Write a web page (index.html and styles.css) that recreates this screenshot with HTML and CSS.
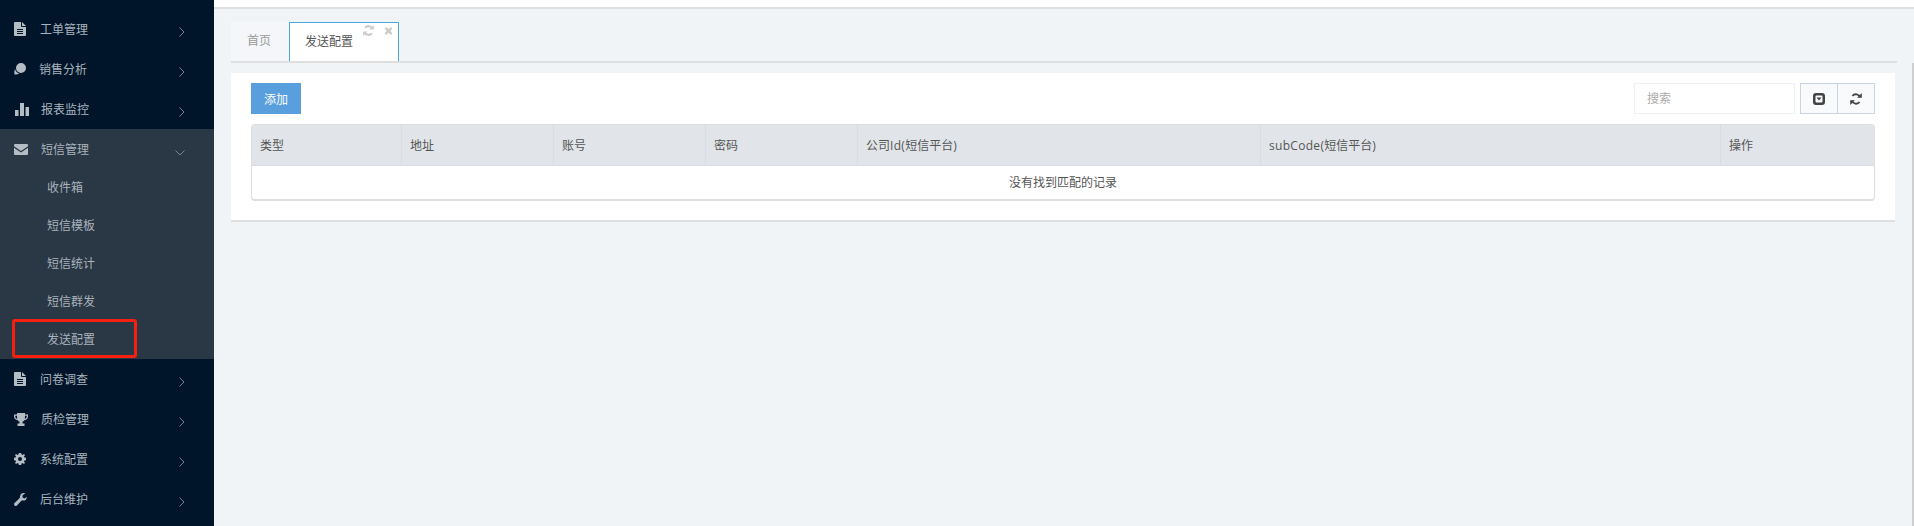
FILE: index.html
```html
<!DOCTYPE html>
<html lang="zh-CN">
<head>
<meta charset="utf-8">
<title>发送配置</title>
<link rel="stylesheet" href="styles.css">
</head>
<body>
<div class="app">
  <aside class="sidebar">
    <a class="nav-item"><svg class="ico w12" viewBox="0 0 12 14"><path fill-rule="evenodd" d="M1 0h6v4a1 1 0 0 0 1 1h4v8a1 1 0 0 1-1 1H1a1 1 0 0 1-1-1V1a1 1 0 0 1 1-1zM8 0l4 4H8zM3 7v1h6V7zM3 9v1h6V9zM3 11v1h6v-1z"/></svg><span class="label">工单管理</span><svg class="chev" viewBox="0 0 6 10"><path d="M.5.5 5 5 .5 9.5"/></svg></a>
    <a class="nav-item"><svg class="ico w12 shift-l" viewBox="0 0 12 12"><path d="M7 0a5 5 0 1 1 0 10A5 5 0 0 1 7 0zM1 6C.2 8 .2 10 .5 11.500c2 .3 3.500-.2 4.800-.9C3.300 10.200 1.700 8.600 1 6z"/></svg><span class="label">销售分析</span><svg class="chev" viewBox="0 0 6 10"><path d="M.5.5 5 5 .5 9.5"/></svg></a>
    <a class="nav-item"><svg class="ico w14 shift-r" viewBox="0 0 14 13"><path d="M0 7h3.500v6H0zM5 0h4v13H5zM10.500 4H14v9h-3.500z"/></svg><span class="label">报表监控</span><svg class="chev" viewBox="0 0 6 10"><path d="M.5.5 5 5 .5 9.5"/></svg></a>
    <div class="nav-group">
      <a class="nav-item"><svg class="ico w14" viewBox="0 0 14 11"><path d="M1 0h12a1 1 0 0 1 1 1v1.300L7 7 0 2.300V1a1 1 0 0 1 1-1zM0 3.800 7 8.500l7-4.700V10a1 1 0 0 1-1 1H1a1 1 0 0 1-1-1z"/></svg><span class="label">短信管理</span><svg class="chev down" viewBox="0 0 10 6"><path d="M.5.500 5 5 9.500.500"/></svg></a>
      <a class="sub-item">收件箱</a>
      <a class="sub-item">短信模板</a>
      <a class="sub-item">短信统计</a>
      <a class="sub-item">短信群发</a>
      <a class="sub-item marked">发送配置</a>
    </div>
    <a class="nav-item"><svg class="ico w12" viewBox="0 0 12 14"><path fill-rule="evenodd" d="M1 0h6v4a1 1 0 0 0 1 1h4v8a1 1 0 0 1-1 1H1a1 1 0 0 1-1-1V1a1 1 0 0 1 1-1zM8 0l4 4H8zM3 7v1h6V7zM3 9v1h6V9zM3 11v1h6v-1z"/></svg><span class="label">问卷调查</span><svg class="chev" viewBox="0 0 6 10"><path d="M.5.5 5 5 .5 9.5"/></svg></a>
    <a class="nav-item"><svg class="ico w14" viewBox="0 0 14 13"><path fill-rule="evenodd" d="M3 0h8v1.500h3v2c0 2-1.500 3.500-3.700 3.700-.5.700-1.100 1.200-1.800 1.500v1.800H10.500V13h-7v-2.500h2V8.700c-.7-.3-1.300-.8-1.800-1.500C1.500 7 0 5.500 0 3.500v-2h3zM1.300 2.800v.7c0 1 .7 2 1.900 2.300-.1-.9-.2-1.900-.2-3zM12.700 2.800H11c0 1.100-.1 2.100-.2 3 1.200-.3 1.900-1.300 1.900-2.300z"/></svg><span class="label">质检管理</span><svg class="chev" viewBox="0 0 6 10"><path d="M.5.5 5 5 .5 9.500"/></svg></a>
    <a class="nav-item"><svg class="ico w12" viewBox="0 0 12 12"><path fill-rule="evenodd" d="M4.800 0h2.400l.3 1.600 1 .4L9.900 1l1.100 1.100L10 3.500l.4 1L12 4.800v2.400l-1.600.3-.4 1 1 1.400L9.900 11 8.500 10l-1 .4L7.200 12H4.800l-.3-1.600-1-.4L2.100 11 1 9.900 2 8.500l-.4-1L0 7.200V4.800l1.600-.3.4-1L1 2.100 2.100 1l1.400 1 1-.4zM6 4a2 2 0 1 0 0 4 2 2 0 0 0 0-4z"/></svg><span class="label">系统配置</span><svg class="chev" viewBox="0 0 6 10"><path d="M.5.5 5 5 .5 9.500"/></svg></a>
    <a class="nav-item"><svg class="ico w13" viewBox="0 0 13 13"><path d="M9.500 0c.6 0 1.100.1 1.600.4L8.500 2.300v2.200l1.900 1.100 2.400-1.600c.1 1.900-1.400 3.600-3.300 3.600-.6 0-1.100-.1-1.600-.4l-5 5.200c-.6.800-1.800.8-2.400.1-.7-.7-.6-1.800.1-2.400l5.200-5C6 3.200 6.500 0 9.500 0z"/></svg><span class="label">后台维护</span><svg class="chev" viewBox="0 0 6 10"><path d="M.5.5 5 5 .5 9.500"/></svg></a>
  </aside>
  <main class="main">
    <div class="topbar"></div>
    <div class="content">
      <nav class="tabs">
        <a class="tab">首页</a>
        <a class="tab active">发送配置<svg class="tab-ico refresh" viewBox="0 0 12 12"><path class="arc" d="M10.300 4.300A4.600 4.600 0 0 0 2.400 3M1.700 7.700A4.600 4.600 0 0 0 9.600 9"/><path class="tip" d="M11.800 0v4.800H7zM.2 12V7.200H5z"/></svg><svg class="tab-ico close" viewBox="0 0 9 9"><path d="M2 0 4.500 2.500 7 0 9 2 6.500 4.500 9 7 7 9 4.500 6.500 2 9 0 7 2.500 4.500 0 2z"/></svg></a>
      </nav>
      <section class="panel">
        <div class="toolbar">
          <button class="btn-add">添加</button>
          <div class="tools">
            <input class="search" type="text" placeholder="搜索">
            <div class="btn-group">
              <button class="tool-btn"><svg class="tool-ico" viewBox="0 0 12 12"><path fill-rule="evenodd" d="M3 0h6a3 3 0 0 1 3 3v6a3 3 0 0 1-3 3H3a3 3 0 0 1-3-3V3a3 3 0 0 1 3-3zM3.500 2.400a1 1 0 0 0-1 1v5.200a1 1 0 0 0 1 1h5a1 1 0 0 0 1-1V3.400a1 1 0 0 0-1-1zM3.500 4.600h5L6 7.600z"/></svg></button>
              <button class="tool-btn"><svg class="tool-ico sync" viewBox="0 0 12 12"><path class="arc" d="M10.300 4.300A4.600 4.600 0 0 0 2.400 3M1.700 7.700A4.600 4.600 0 0 0 9.600 9"/><path class="tip" d="M11.800 0v4.800H7zM.2 12V7.200H5z"/></svg></button>
            </div>
          </div>
        </div>
        <div class="table-wrap">
          <table class="grid">
            <colgroup>
              <col class="c1"><col class="c2"><col class="c2"><col class="c2"><col class="c5"><col class="c6"><col class="c7">
            </colgroup>
            <thead>
              <tr><th>类型</th><th>地址</th><th>账号</th><th>密码</th><th>公司<span class="lat">Id(</span>短信平台)</th><th><span class="lat">subCode(</span>短信平台)</th><th>操作</th></tr>
            </thead>
            <tbody>
              <tr><td colspan="7">没有找到匹配的记录</td></tr>
            </tbody>
          </table>
        </div>
      </section>
    </div>
    <div class="scroll-thumb"></div>
  </main>
</div>
</body>
</html>
```
FILE: styles.css
```css
* { box-sizing: border-box; }
html, body { margin: 0; height: 100%; overflow: hidden; }
body {
  font-family: "Open Sans", "Noto Sans CJK SC", sans-serif;
  font-size: 12px;
  color: #555;
  background: #f0f4f7;
}
.app { display: flex; height: 526px; }

/* sidebar */
.sidebar { width: 214px; flex: none; background: #00152a; padding-top: 9px; }
.nav-item {
  display: flex;
  align-items: center;
  height: 40px;
  padding-left: 14px;
  color: #a9b3bd;
  position: relative;
}
.nav-group { background: #2a3744; }
.ico { flex: none; fill: #b4bcc4; margin-right: 14px; }
.w12 { width: 12px; height: 14px; }
.w13 { width: 13px; height: 13px; margin-right: 13px; }
.w14 { width: 14px; height: 13px; margin-right: 13px; }
.shift-l { margin-right: 13px; height: 12px; }
.shift-r { margin-left: 1px; margin-right: 12px; }
.label { flex: none; width: 48px; line-height: 16px; padding-top: 2px; }
.chev {
  width: 6px;
  height: 10px;
  margin-left: auto;
  margin-right: 29px;
  margin-top: 6px;
  fill: none;
  stroke: #76828e;
  stroke-width: 1;
}
.chev.down { width: 10px; height: 6px; margin-right: 29px; margin-top: 8px; }
.sub-item {
  display: block;
  height: 38px;
  line-height: 38px;
  padding-left: 47px;
  color: #a9b3bd;
  position: relative;
}
.marked::after {
  content: "";
  box-sizing: border-box;
  position: absolute;
  left: 12px;
  top: -2px;
  width: 125px;
  height: 39px;
  border: 3px solid #f5200f;
  border-radius: 3px;
}

/* main */
.main { flex: 1; min-width: 0; position: relative; }
.topbar { height: 9px; background: #fff; border-bottom: 2px solid #dfdfdf; }
.content { padding: 13px 17px 0; }
.tabs { display: flex; height: 41px; border-bottom: 2px solid #dfdfdf; }
.tab {
  display: block;
  height: 39px;
  line-height: 37px;
  width: 58px;
  padding-right: 2px;
  text-align: center;
  color: #999;
  background: #f4f6f9;
}
.tab.active {
  width: 110px;
  position: relative;
  padding: 0 0 0 15px;
  text-align: left;
  color: #555;
  background: #fff;
  border: 1px solid #4ba8de;
  border-bottom: 0;
}
.tab-ico { position: absolute; fill: #ccc; }
.refresh { left: 73px; top: 2px; width: 11px; height: 11px; }
.close { left: 94px; top: 4px; width: 9px; height: 8px; }
.arc { fill: none; stroke: #ccc; stroke-width: 2.400; }
.tip { fill: #ccc; }

.panel {
  margin: 10px 2px 0 0;
  padding: 10px 20px 19px;
  background: #fff;
  border-bottom: 2px solid #dfdfdf;
}
.toolbar { display: flex; justify-content: space-between; margin-bottom: 10px; height: 31px; }
.btn-add {
  width: 50px;
  height: 31px;
  padding: 0;
  border: 0;
  background: #5a9fdd;
  color: #fff;
  font: inherit;
}
.tools { display: flex; gap: 5px; }
.search {
  width: 161px;
  height: 31px;
  padding: 0 12px;
  border: 1px solid #eff1f4;
  outline: 0;
  font: inherit;
  color: #555;
}
.search::placeholder { color: #aaa; opacity: 1; }
.btn-group { display: flex; }
.tool-btn {
  width: 38px;
  height: 31px;
  padding: 0;
  display: flex;
  align-items: center;
  justify-content: center;
  background: #f9fafb;
  border: 1px solid #cbd5e1;
}
.tool-btn + .tool-btn { margin-left: -1px; }
.tool-ico { width: 12px; height: 12px; fill: #444; }
.sync .arc { stroke: #444; stroke-width: 1.800; }
.sync .tip { fill: #444; }

/* table */
.table-wrap {
  border: 1px solid #dedede;
  border-bottom-width: 2px;
  border-radius: 4px;
  overflow: hidden;
}
.grid { width: 100%; table-layout: fixed; border-collapse: separate; border-spacing: 0; }
.c1 { width: 150px; }
.c2 { width: 152px; }
.c5 { width: 403px; }
.c6 { width: 460px; }
.c7 { width: 153px; }
.grid th {
  height: 41px;
  padding: 0 8px;
  font-weight: 400;
  text-align: left;
  color: #555;
  background: #e1e5e9;
  border-right: 1px solid #d9dde1;
  border-bottom: 1px solid #d9dde1;
}
.grid th:last-child { border-right: 0; }
.grid td { height: 33px; padding: 0 8px 1px; text-align: center; color: #555; }
.lat { letter-spacing: .3px; }

.scroll-thumb {
  position: absolute;
  right: 0;
  top: 63px;
  width: 2px;
  height: 463px;
  background: #cfcfcf;
}
```
